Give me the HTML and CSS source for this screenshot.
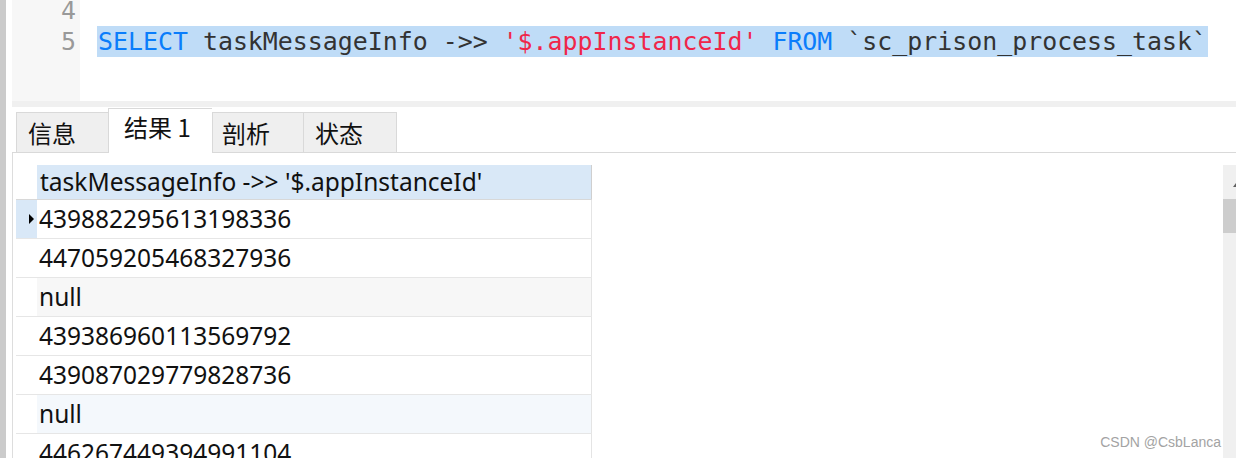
FILE: index.html
```html
<!DOCTYPE html>
<html lang="zh">
<head>
<meta charset="utf-8">
<title>结果</title>
<link rel="stylesheet" href="styles.css">
</head>
<body>
<div class="app">
  <div class="leftstrip"></div>
  <div class="main">
    <div class="editor">
      <div class="gutter">
        <div class="lines">
          <div class="ln">4</div>
          <div class="ln">5</div>
          <div class="ln"></div>
        </div>
      </div>
      <div class="code">
        <div class="lines">
          <div class="cl"></div>
          <div class="cl"><span class="sel"><span class="kw">SELECT</span> taskMessageInfo -&gt;&gt; <span class="str">'$.appInstanceId'</span> <span class="kw">FROM</span> `sc_prison_process_task`</span></div>
          <div class="cl"></div>
        </div>
      </div>
    </div>
    <div class="band"></div>
    <div class="tabs">
      <div class="tab t1">信息</div>
      <div class="tab active">结果 1</div>
      <div class="tab t3">剖析</div>
      <div class="tab t4">状态</div>
      <div class="tabfill"></div>
    </div>
    <div class="content">
      <div class="grid">
        <div class="row head">
          <div class="ind"></div>
          <div class="cell">taskMessageInfo -&gt;&gt; '$.appInstanceId'</div>
        </div>
        <div class="row">
          <div class="ind cur"><span class="tri"></span></div>
          <div class="cell">439882295613198336</div>
        </div>
        <div class="row">
          <div class="ind"></div>
          <div class="cell">447059205468327936</div>
        </div>
        <div class="row">
          <div class="ind"></div>
          <div class="cell gray">null</div>
        </div>
        <div class="row">
          <div class="ind"></div>
          <div class="cell">439386960113569792</div>
        </div>
        <div class="row">
          <div class="ind"></div>
          <div class="cell">439087029779828736</div>
        </div>
        <div class="row">
          <div class="ind"></div>
          <div class="cell blue">null</div>
        </div>
        <div class="row">
          <div class="ind"></div>
          <div class="cell">446267449394991104</div>
        </div>
      </div>
      <div class="scrollbar">
        <div class="arrow">
          <svg width="13" height="34" viewBox="0 0 13 34"><polygon points="10,22 13,18 16,22" fill="#606060"/></svg>
        </div>
        <div class="thumb"></div>
        <div class="track"></div>
      </div>
    </div>
  </div>
</div>
<div class="watermark">CSDN @CsbLanca</div>
</body>
</html>
```
FILE: styles.css
```css
html, body {
  margin: 0;
  padding: 0;
  background: #ffffff;
}
body {
  width: 1236px;
  height: 458px;
  overflow: hidden;
  position: relative;
  font-family: "Noto Sans", "Noto Sans CJK SC", sans-serif;
}
.app {
  display: flex;
  height: 458px;
}
.leftstrip {
  width: 6px;
  background: #cbcbcb;
  flex: none;
}
.main {
  flex: 1;
  display: flex;
  flex-direction: column;
  padding-left: 6px;
  min-width: 0;
}
.editor {
  height: 101px;
  display: flex;
  overflow: hidden;
  font-family: "DejaVu Sans Mono", monospace;
  font-size: 24.9px;
}
.gutter {
  width: 64px;
  padding-right: 4px;
  background: #f7f7f7;
  color: #999999;
  text-align: right;
  flex: none;
}
.lines {
  margin-top: -5px;
}
.ln, .cl {
  height: 31px;
  line-height: 31px;
  white-space: pre;
}
.code {
  flex: 1;
  padding-left: 17px;
  color: #333333;
}
.sel {
  display: inline-block;
  background: #bfdcf7;
  padding: 0 1px;
  height: 31px;
}
.kw {
  color: #0b7dfb;
}
.str {
  color: #f0264a;
}
.band {
  height: 6px;
  background: #f0f0f0;
}
.tabs {
  display: flex;
  align-items: flex-end;
  padding-left: 4px;
  padding-top: 1px;
  box-sizing: border-box;
  height: 46px;
  border-bottom: 1px solid #d9d9d9;
  font-family: "Noto Sans CJK SC", sans-serif;
  font-size: 24px;
  color: #111111;
}
.tab {
  box-sizing: border-box;
  height: 40px;
  background: #efefef;
  border: 1px solid #d9d9d9;
  border-bottom: none;
  padding-left: 11px;
  line-height: 40px;
  flex: none;
}
.t1 { width: 92px; border-right: none; }
.t3 { width: 92px; padding-left: 9px; }
.t4 { width: 93px; border-left: none; }
.tab.active {
  width: 104px;
  height: 45px;
  background: #ffffff;
  margin-bottom: -1px;
  padding-left: 15px;
  line-height: 36px;
  border-right: none;
}
.tabfill {
  flex: 1;
}
.content {
  flex: 1;
  display: flex;
  border-left: 1px solid #dddddd;
  padding-top: 12px;
  min-height: 0;
}
.grid {
  margin-left: 3px;
  display: flex;
  flex-direction: column;
  font-size: 24.5px;
  color: #111111;
}
.row {
  display: flex;
  height: 39px;
  border-bottom: 1px solid #e6e6e6;
  box-sizing: border-box;
  flex: none;
}
.row.head {
  height: 35px;
  border-bottom: 1px solid #d8d8d8;
}
.ind {
  width: 21px;
  flex: none;
  display: flex;
  align-items: center;
  justify-content: flex-end;
}
.ind.cur {
  background: #d9e8f7;
}
.tri {
  width: 0;
  height: 0;
  border-top: 5px solid transparent;
  border-bottom: 5px solid transparent;
  border-left: 5px solid #000000;
  margin-right: 3px;
}
.cell {
  box-sizing: border-box;
  width: 555px;
  padding-left: 2px;
  line-height: 38px;
  border-right: 1px solid #e4e4e4;
  white-space: nowrap;
}
.head .cell {
  background: #d9e8f7;
  line-height: 34px;
  padding-left: 3px;
  border-right: 1px solid #cfcfcf;
}
.cell.gray {
  background: #f7f7f7;
}
.cell.blue {
  background: #f4f8fc;
}
.scrollbar {
  margin-left: auto;
  width: 13px;
  display: flex;
  flex-direction: column;
  background: #f0f0f0;
}
.arrow {
  height: 34px;
  overflow: hidden;
}
.arrow svg {
  display: block;
}
.thumb {
  height: 34px;
  background: #cdcdcd;
}
.track {
  flex: 1;
}
.watermark {
  position: absolute;
  right: 15px;
  bottom: 8px;
  font-family: "Liberation Sans", Arial, sans-serif;
  font-size: 14px;
  color: #a3a3a3;
}
```
